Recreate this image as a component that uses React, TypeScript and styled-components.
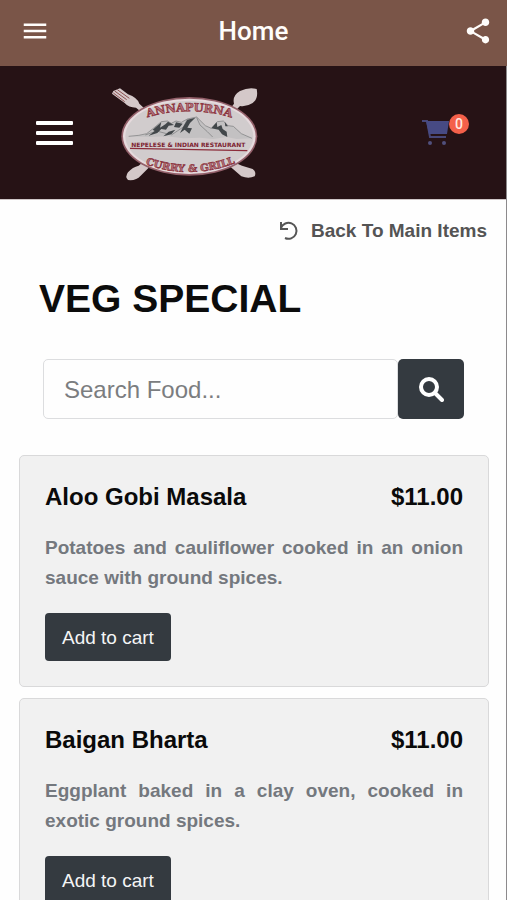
import React from "react";
import styled, { createGlobalStyle } from "styled-components";
import { MdMenu, MdShare } from "react-icons/md";

const GlobalStyle = createGlobalStyle`
  * { box-sizing: border-box; }
  body {
    margin: 0;
    background: #fefefe;
    font-family: "Liberation Sans", Arial, sans-serif;
  }
  button, input { font-family: inherit; }
`;

const AppBar = styled.header`
  display: grid;
  grid-template-columns: 40px 1fr 40px;
  align-items: center;
  height: 66px;
  padding: 0 9px 4px 15px;
  background: #7a5548;
  color: #fffdfb;
`;

const IconButton = styled.button`
  display: flex;
  align-items: center;
  justify-content: center;
  height: 40px;
  padding: 0;
  border: 0;
  background: none;
  color: inherit;
  cursor: pointer;
`;

const AppTitle = styled.div`
  padding-right: 6px;
  font-family: Roboto, sans-serif;
  font-size: 26px;
  font-weight: 500;
  line-height: 32px;
  text-align: center;
`;

const Page = styled.div`
  min-height: calc(100vh - 66px);
  border-right: 1px solid #8c8a8c;
`;

const SiteHeader = styled.nav`
  display: flex;
  align-items: center;
  height: 134px;
  padding: 0 37px 0 36px;
  background: #261215;
  border-bottom: 1px solid #cfc6c7;
`;

const NavToggle = styled.button`
  display: flex;
  flex-direction: column;
  gap: 6px;
  width: 37px;
  padding: 0;
  border: 0;
  background: none;
  cursor: pointer;
`;

const Bar = styled.span`
  height: 4px;
  border-radius: 1px;
  background: #fff;
`;

const LogoLink = styled.a`
  display: block;
  height: 93px;
  margin: 4px auto 0 39px;
`;

const CartLink = styled.a`
  position: relative;
  display: block;
  width: 47px;
  height: 28px;
`;

const Badge = styled.span`
  position: absolute;
  top: -5px;
  right: 0;
  width: 20px;
  height: 20px;
  border-radius: 50%;
  background: #f4604a;
  color: #ffe9e2;
  font-family: Roboto, sans-serif;
  font-size: 14px;
  font-weight: 500;
  line-height: 20px;
  text-align: center;
`;

const Content = styled.main`
  padding: 17px 17px 0 19px;
`;

const BackLink = styled.a`
  display: flex;
  align-items: center;
  justify-content: flex-end;
  gap: 12px;
  padding-right: 2px;
  color: #545454;
  font-size: 19px;
  font-weight: 700;
  line-height: 28px;
  text-decoration: none;
`;

const Title = styled.h1`
  margin: 30px 21px 0 20px;
  color: #0c0c0c;
  font-size: 39px;
  font-weight: 700;
  line-height: 48px;
`;

const SearchForm = styled.form`
  display: flex;
  height: 60px;
  margin: 36px 25px 36px 24px;
`;

const SearchInput = styled.input`
  flex: 1;
  min-width: 0;
  padding: 2px 20px 0;
  border: 1px solid #dcdddf;
  border-radius: 5px;
  background: #fefefe;
  color: #343a40;
  font-size: 24px;
  outline: none;
  &::placeholder { color: #7b7d80; opacity: 1; }
`;

const SearchButton = styled.button`
  display: flex;
  align-items: center;
  justify-content: center;
  width: 66px;
  padding: 0;
  border: 0;
  border-radius: 5px;
  background: #343a40;
  cursor: pointer;
`;

const CardList = styled.ul`
  display: grid;
  gap: 11px;
  margin: 0;
  padding: 0;
  list-style: none;
`;

const Card = styled.li`
  padding: 25px;
  border: 1px solid #d9d9da;
  border-radius: 5px;
  background: #f1f1f1;
`;

const CardHead = styled.div`
  display: flex;
  justify-content: space-between;
  margin-bottom: 20px;
  color: #0a0a0a;
  font-size: 24px;
  font-weight: 700;
  line-height: 32px;
`;

const DishName = styled.h2`
  margin: 0;
  font: inherit;
`;

const Description = styled.p`
  margin: 0 0 20px;
  color: #74787e;
  font-size: 19px;
  font-weight: 700;
  line-height: 30px;
  text-align: justify;
`;

const AddButton = styled.button`
  display: block;
  height: 48px;
  padding: 2px 17px 0;
  border: 0;
  border-radius: 4px;
  background: #343a40;
  color: #f4f5f6;
  font-size: 19px;
  cursor: pointer;
`;

function Logo() {
  return (
    <svg width="146" height="93" viewBox="36 39 438 279" role="img" aria-label="Annapurna Curry & Grill">
      <g fill="#d4c8c9">
        <path d="M60 40 L84 58 Q112 68 118 86 L150 116 L140 124 L108 98 Q86 98 74 84 L36 56 L40 48 Z" />
        <path d="M470 42 Q476 70 458 84 Q440 96 420 93 L396 118 L384 110 L402 86 Q396 62 420 48 Q446 36 470 42 Z" />
        <path d="M128 262 L146 278 L122 302 Q108 318 84 315 Q74 306 84 292 Q98 276 116 272 Z" />
        <path d="M402 262 L392 276 L424 304 Q446 312 464 304 Q470 290 458 282 L426 272 Z" />
      </g>
      <path d="M44 48 L80 74 M52 44 L88 70 M40 54 L74 80" stroke="#8b4f50" strokeWidth="3" />
      <ellipse cx="268" cy="184" rx="204" ry="118" fill="#93606a" />
      <ellipse cx="268" cy="184" rx="199" ry="113" fill="#e6dadd" />
      <ellipse cx="268" cy="184" rx="192" ry="107" fill="#d1cccd" />
      <path d="M84 184 Q120 182 140 176 L160 160 L184 140 L202 138 L214 145 L228 138 L244 142 L262 132 L290 126 L316 152 L334 160 L352 140 L370 138 L384 152 L400 154 L424 176 L456 190 L410 192 L380 186 L340 192 L300 188 L250 190 L200 184 L150 186 Z" fill="#c3c1c2" />
      <path
        d="M86 184 Q120 182 140 176 L160 160 L184 140 L202 138 L214 145 L228 138 L244 142 L262 132 L290 126 L316 152 L334 160 L352 140 L370 138 L384 152 L400 154 L424 176 L456 190 M290 128 L300 150 L322 170 L338 186 M262 134 L250 156 L232 168 L214 180 M136 180 L170 168 L200 176"
        fill="none"
        stroke="#77787a"
        strokeWidth="2"
      />
      <path d="M158 164 L184 142 L180 158 L196 148 L204 140 L222 150 L206 152 L198 164 L184 162 L172 174 L146 182 L164 168 Z M228 142 L248 146 L238 158 L222 156 Z M262 134 L286 128 L270 144 L262 158 L276 160 L268 176 L254 164 L240 174 L248 158 Z M334 160 L350 142 L352 156 L364 150 L368 162 L380 170 L382 186 L366 178 L356 164 Z M374 140 L384 154 L376 154 Z M206 170 L226 164 L214 178 L190 184 Z" fill="#42474a" />
      <defs>
        <path id="logo-top" d="M120 134 Q268 84 416 134" />
        <path id="logo-bottom" d="M116 260 Q270 324 426 256" />
      </defs>
      <g fill="#b5757e" stroke="#8c3540" strokeWidth="2" fontFamily="'DejaVu Serif', serif" fontWeight="700">
        <text fontSize="34" textAnchor="middle">
          <textPath href="#logo-top" startOffset="50%">ANNAPURNA</textPath>
        </text>
        <text fontSize="30" textAnchor="middle">
          <textPath href="#logo-bottom" startOffset="50%">CURRY &amp; GRILL</textPath>
        </text>
      </g>
      <text x="265" y="216" fontSize="18" fontWeight="700" fontFamily="'DejaVu Sans', sans-serif" fill="#7c2230" textAnchor="middle">
        NEPELESE &amp; INDIAN RESTAURANT
      </text>
      <path d="M90 220 L442 227" stroke="#8c2c3a" strokeWidth="4" />
    </svg>
  );
}

function CartIcon() {
  return (
    <svg width="28" height="28" viewBox="0 0 28 28" aria-hidden="true">
      <path d="M0 2 H5 L8 18 H24" fill="none" stroke="#474778" strokeWidth="2" />
      <path d="M4 2 H27 L25 15 H7 Z" fill="#474a84" />
      <circle cx="8" cy="24" r="2" fill="#51507c" />
      <circle cx="22" cy="24" r="2" fill="#51507c" />
    </svg>
  );
}

function UndoIcon() {
  return (
    <svg width="20" height="20" viewBox="0 0 20 20" fill="none" stroke="#555" strokeWidth="2" aria-hidden="true">
      <path d="M2 1 V8 H9" />
      <path d="M2 7 A8 8 0 1 1 6 17" />
    </svg>
  );
}

function SearchIcon() {
  return (
    <svg width="26" height="26" viewBox="0 0 26 26" fill="none" stroke="#fff" strokeWidth="4" aria-hidden="true">
      <circle cx="11" cy="11" r="8" />
      <path d="M17 17 L24 24" strokeLinecap="round" />
    </svg>
  );
}

const dishes = [
  {
    name: "Aloo Gobi Masala",
    price: "$11.00",
    description: "Potatoes and cauliflower cooked in an onion sauce with ground spices.",
  },
  {
    name: "Baigan Bharta",
    price: "$11.00",
    description: "Eggplant baked in a clay oven, cooked in exotic ground spices.",
  },
];

export default function App() {
  return (
    <>
      <GlobalStyle />
      <AppBar>
        <IconButton type="button" aria-label="Menu">
          <MdMenu size={30} />
        </IconButton>
        <AppTitle>Home</AppTitle>
        <IconButton type="button" aria-label="Share">
          <MdShare size={30} />
        </IconButton>
      </AppBar>
      <Page>
        <SiteHeader>
          <NavToggle type="button" aria-label="Toggle navigation">
            <Bar />
            <Bar />
            <Bar />
          </NavToggle>
          <LogoLink href="#home">
            <Logo />
          </LogoLink>
          <CartLink href="#cart" aria-label="Cart">
            <CartIcon />
            <Badge>0</Badge>
          </CartLink>
        </SiteHeader>
        <Content>
          <BackLink href="#menu">
            <UndoIcon />
            Back To Main Items
          </BackLink>
          <Title>VEG SPECIAL</Title>
          <SearchForm role="search" onSubmit={(e) => e.preventDefault()}>
            <SearchInput type="text" placeholder="Search Food..." aria-label="Search Food" />
            <SearchButton type="submit" aria-label="Search">
              <SearchIcon />
            </SearchButton>
          </SearchForm>
          <CardList>
            {dishes.map((dish) => (
              <Card key={dish.name}>
                <CardHead>
                  <DishName>{dish.name}</DishName>
                  <span>{dish.price}</span>
                </CardHead>
                <Description>{dish.description}</Description>
                <AddButton type="button">Add to cart</AddButton>
              </Card>
            ))}
          </CardList>
        </Content>
      </Page>
    </>
  );
}
